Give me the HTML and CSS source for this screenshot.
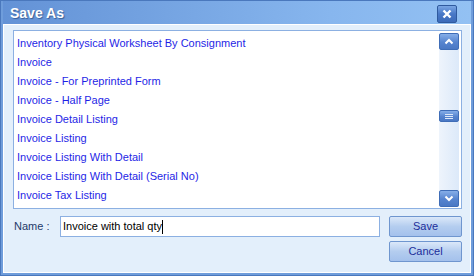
FILE: index.html
```html
<!DOCTYPE html>
<html lang="en">
<head>
    <meta charset="UTF-8">
    <title>Save As</title>
    <link rel="stylesheet" href="styles.css">
</head>
<body>

<div class="window">

    <div class="titlebar">
        <span class="title">Save As</span>
        <div class="close">
            <svg width="10" height="10" viewBox="0 0 10 10"><path d="M1.5 1.5 L8.5 8.5 M8.5 1.5 L1.5 8.5" stroke="#fff" stroke-width="2.4"/></svg>
        </div>
    </div>

    <div class="content">
        <div class="listbox">
            <ul class="items">
                <li>Inventory Physical Worksheet By Consignment</li>
                <li>Invoice</li>
                <li>Invoice - For Preprinted Form</li>
                <li>Invoice - Half Page</li>
                <li>Invoice Detail Listing</li>
                <li>Invoice Listing</li>
                <li>Invoice Listing With Detail</li>
                <li>Invoice Listing With Detail (Serial No)</li>
                <li>Invoice Tax Listing</li>
            </ul>
            <div class="scrollbar">
                <div class="sbtn">
                    <svg width="10" height="7" viewBox="0 0 10 7"><path d="M1.5 5.5 L5 2 L8.5 5.5" stroke="#fff" stroke-width="2" fill="none"/></svg>
                </div>
                <div class="track">
                    <div class="thumb">
                        <svg width="8" height="5" viewBox="0 0 8 5"><path d="M0 0.5 H8 M0 2.5 H8 M0 4.5 H8" stroke="#dde8f8" stroke-width="1"/></svg>
                    </div>
                </div>
                <div class="sbtn">
                    <svg width="10" height="7" viewBox="0 0 10 7"><path d="M1.5 1.5 L5 5 L8.5 1.5" stroke="#fff" stroke-width="2" fill="none"/></svg>
                </div>
            </div>
        </div>

        <div class="bottom">
            <label class="name-label">Name :</label>
            <div class="input">Invoice with total qty<span class="caret"></span></div>
            <div class="buttons">
                <div class="btn">Save</div>
                <div class="btn">Cancel</div>
            </div>
        </div>
    </div>

</div>

</body>
</html>
```

FILE: styles.css
```css
body {
    margin: 0;
    padding: 0;
    width: 474px;
    height: 276px;
    overflow: hidden;
    font-family: "Liberation Sans", Arial, sans-serif;
    font-size: 11px;
}

.window {
    box-sizing: border-box;
    width: 474px;
    height: 276px;
    display: flex;
    flex-direction: column;
    background: #6f9ddb;
    border: 1px solid #4a78bd;
    padding: 0 2px 2px 2px;
}

.titlebar {
    height: 23px;
    display: flex;
    align-items: center;
    justify-content: space-between;
    padding: 0 14px 0 7px;
    background: linear-gradient(to right, #6392d6, #87b6ee 70%, #93c1f3);
}

.title {
    color: #fff;
    font-family: "Liberation Sans", Arial, sans-serif;
    font-weight: bold;
    font-size: 14px;
    text-shadow: 1px 1px 1px #3a5f96;
}

.close {
    width: 20px;
    height: 18px;
    margin-top: 3px;
    box-sizing: border-box;
    display: flex;
    align-items: center;
    justify-content: center;
    border: 1px solid #2f5a9e;
    border-radius: 2px;
    background: linear-gradient(#7aa6e4, #4878c6 50%, #3c6bb9);
}

.content {
    flex: 1;
    display: flex;
    flex-direction: column;
    background: #e3effb;
    border: 1px solid #fff;
    padding: 5px 8px 8px 9px;
}

.listbox {
    height: 177px;
    display: flex;
    background: #fff;
    border: 1px solid #8cb0e2;
}

.items {
    flex: 1;
    list-style: none;
    margin: 0;
    padding: 3px 0 0 3px;
}

.items li {
    height: 19px;
    line-height: 19px;
    color: #1f1fe6;
    white-space: nowrap;
}

.scrollbar {
    width: 20px;
    margin: 2px 2px 1px 0;
    display: flex;
    flex-direction: column;
    background: linear-gradient(to right, #eef4fc, #dce9f9);
}

.sbtn {
    height: 17px;
    box-sizing: border-box;
    display: flex;
    align-items: center;
    justify-content: center;
    border: 1px solid #3f6db7;
    border-radius: 2px;
    background: linear-gradient(#86aee8, #5684cf 55%, #4a78c4);
}

.track {
    flex: 1;
    padding-top: 60px;
}

.thumb {
    height: 12px;
    box-sizing: border-box;
    display: flex;
    align-items: center;
    justify-content: center;
    border: 1px solid #3f6db7;
    border-radius: 2px;
    background: linear-gradient(#86aee8, #5684cf 55%, #4a78c4);
}

.bottom {
    display: flex;
    align-items: flex-start;
    margin-top: 7px;
}

.name-label {
    width: 46px;
    padding: 4px 0 0 1px;
    color: #1e3a6a;
}

.input {
    width: 320px;
    height: 21px;
    box-sizing: border-box;
    border: 1px solid #8cb0e2;
    background: #fff;
    padding: 3px 0 0 2px;
    color: #000;
    display: flex;
}

.caret {
    width: 1px;
    height: 14px;
    background: #000;
}

.buttons {
    margin-left: 9px;
    display: flex;
    flex-direction: column;
    gap: 4px;
}

.btn {
    width: 73px;
    height: 21px;
    box-sizing: border-box;
    border: 1px solid #6f96cf;
    border-radius: 2px;
    background: linear-gradient(#dbe8f9, #b4cdef 50%, #a4c1ec);
    color: #1c2e9a;
    text-align: center;
    line-height: 19px;
}
```
